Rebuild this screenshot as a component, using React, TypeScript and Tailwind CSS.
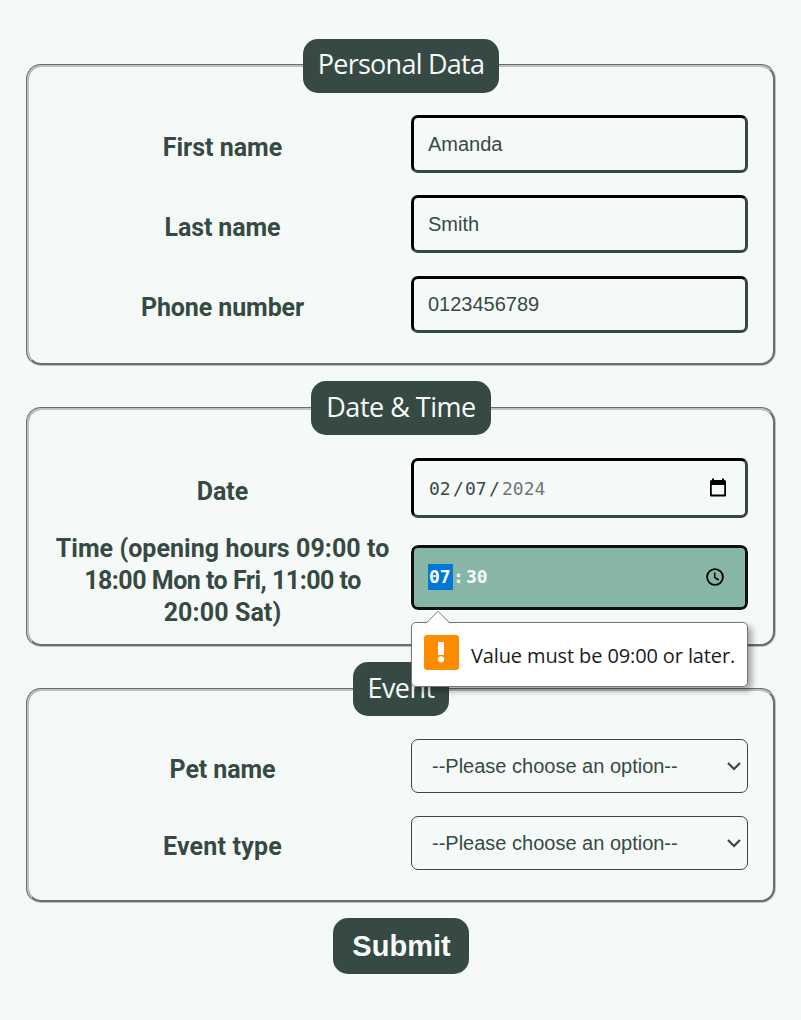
import type { ReactNode } from "react";

function Section({ title, height, legend, children }: { title: ReactNode; height: string; legend: string; children: ReactNode }) {
  return (
    <fieldset className={`min-w-0 rounded-[15px] border-[3px] border-[#c0c0c0] px-[21px] [border-style:groove] ${height}`}>
      <legend className={`mx-auto flex h-[54px] items-center justify-center rounded-[15px] bg-[#364a43] pb-[2px] font-['Open_Sans',sans-serif] text-[27px] whitespace-nowrap text-[#f6faf9] ${legend}`}>
        {title}
      </legend>
      {children}
    </fieldset>
  );
}

function Row({ label, text, className, children }: { label: ReactNode; text: string; className: string; children: ReactNode }) {
  return (
    <div className={`flex items-center gap-4 ${className}`}>
      <div className={`w-[345px] shrink-0 text-center font-[Roboto,sans-serif] text-[25px] leading-8 font-bold whitespace-nowrap ${text}`}>{label}</div>
      {children}
    </div>
  );
}

const inset =
  "flex h-full w-[337px] shrink-0 items-center rounded-[7px] border-[3px] border-t-black border-r-[#364a43] border-b-[#364a43] border-l-black pl-[14px]";

function TextBox({ value }: { value: string }) {
  return <div className={`${inset} text-[20px] leading-[30px]`}>{value}</div>;
}

function Choice() {
  return (
    <div className="flex h-[54px] w-[337px] shrink-0 items-center justify-between rounded-[7px] border border-[#364a43] pr-[5px] pl-5 text-[20px]">
      <span>--Please choose an option--</span>
      <svg width="16" height="16" viewBox="0 0 16 16" fill="none" stroke="#364a43" strokeWidth="2.2">
        <path d="M2 5 8 11 14 5" />
      </svg>
    </div>
  );
}

export default function App() {
  return (
    <div className="flex h-[1020px] w-[801px] flex-col bg-[#f5faf9] pt-[38.6px] pr-[25px] pl-[26px] font-['Liberation_Sans',Arial,sans-serif] text-[#364a43]">
      <Section title={<span>Personal Data</span>} height="h-[327.6px]" legend="w-[196px] tracking-[-0.75px]">
        <Row label="First name" text="pt-2" className="mt-[22.4px] h-[58px]">
          <TextBox value="Amanda" />
        </Row>
        <Row label="Last name" text="pt-2 tracking-[-0.1px]" className="mt-[22px] h-[58px]">
          <TextBox value="Smith" />
        </Row>
        <Row label="Phone number" text="pt-[8px] tracking-[-0.1px]" className="mt-[23px] h-[57px]">
          <TextBox value="0123456789" />
        </Row>
      </Section>

      <div className="h-[15px] shrink-0" />

      <Section title={<span>Date &amp; Time</span>} height="h-[266px]" legend="w-[180px] tracking-[-0.5px]">
        <Row label="Date" text="pt-2" className="mt-[22.8px] h-[60px]">
          <div className={`${inset} justify-between pr-[18px] font-['DejaVu_Sans_Mono',monospace] text-[18px]`}>
            <div className="flex pt-px">
              <span className="w-[25px] pl-[1px]">02</span>
              <span className="w-[11px]">/</span>
              <span className="w-[25px] pl-[1px]">07</span>
              <span className="w-[12px]">/</span>
              <span className="pl-[1px] text-[#6f7573]">2024</span>
            </div>
            <svg width="18" height="20" viewBox="0 0 18 20" fill="none">
              <path d="M1.9 4V17.5H16.1V4" stroke="black" strokeWidth="1.8" strokeLinejoin="round" />
              <path d="M1 3.5Q1 2 2.5 2H3V0.5H5V2H13V0.5H15V2H15.5Q17 2 17 3.5V7H1Z" fill="black" />
            </svg>
          </div>
        </Row>
        <div className="mt-[14px] flex gap-4">
          <div className="w-[345px] shrink-0 pt-px text-center font-[Roboto,sans-serif] text-[25px] leading-8 font-bold whitespace-nowrap">
            <span className="tracking-[0.05px]">Time (opening hours 09:00 to</span>
            <br />
            <span className="tracking-[-0.5px]">18:00 Mon to Fri, 11:00 to</span>
            <br />
            <span className="tracking-[0.1px]">20:00 Sat)</span>
          </div>
          <div className="relative mt-[13px] flex h-[65px] w-[337px] shrink-0 items-center justify-between rounded-[7px] border-[3px] border-[#101010] bg-[#87b5a6] pr-5 pl-[14px] font-['DejaVu_Sans_Mono',monospace] text-[18px] font-bold text-[#f6faf9] outline-1 outline-white">
            <div className="flex items-center leading-[26px]">
              <span className="h-[26px] w-[25px] bg-[#0078d7] pl-[1px] text-white">07</span>
              <span className="w-[13px]">:</span>
              <span>30</span>
            </div>
            <svg width="18" height="18" viewBox="0 0 18 18" className="mr-px" fill="none" stroke="black" strokeWidth="1.8">
              <circle cx="9" cy="9" r="7.9" />
              <path d="M8.7 4.5V9.5L12.8 12" strokeWidth="1.5" />
            </svg>
            <div
              role="tooltip"
              className="absolute top-[74px] left-[-3px] z-10 flex h-[65px] w-[337px] items-center rounded-[5px] border border-[#767676] bg-white pl-3 font-['Open_Sans',sans-serif] text-[20px] font-normal text-[#1b1b1b] shadow-[4px_4px_6px_rgba(0,0,0,0.35)]"
            >
              <svg className="absolute top-[-13px] left-[13px]" width="26" height="14" viewBox="0 0 26 14">
                <path d="M1 14V13.5L13 1.5 25 13.5V14Z" fill="white" />
                <path d="M0.5 12.8H1.5L13 1.3 24.5 12.8H25.5" fill="none" stroke="#767676" />
              </svg>
              <svg className="-mt-[4px] mr-3 shrink-0" width="35" height="35" viewBox="0 0 35 35">
                <rect width="35" height="35" rx="3" fill="#ff8c00" />
                <rect x="14" y="7" width="6" height="13" fill="white" />
                <circle cx="17" cy="24.3" r="3.1" fill="white" />
              </svg>
              <span className="pt-[3px] tracking-[-0.12px] whitespace-nowrap">Value must be 09:00 or later.</span>
            </div>
          </div>
        </div>
      </Section>

      <div className="h-[15px] shrink-0" />

      <Section title={<span>Event</span>} height="h-[240.6px]" legend="w-[96px] tracking-[-0.6px]">
        <Row label="Pet name" text="pt-2 tracking-[-0.1px]" className="mt-[22.8px]">
          <Choice />
        </Row>
        <Row label="Event type" text="pt-2 tracking-[0.2px]" className="mt-[23px]">
          <Choice />
        </Row>
      </Section>

      <button className="mx-auto mt-[15.2px] h-[56px] w-[136px] shrink-0 rounded-[15px] bg-[#364a43] pt-px pl-px text-[29px] leading-none font-bold text-[#f6faf9]">
        Submit
      </button>
    </div>
  );
}
